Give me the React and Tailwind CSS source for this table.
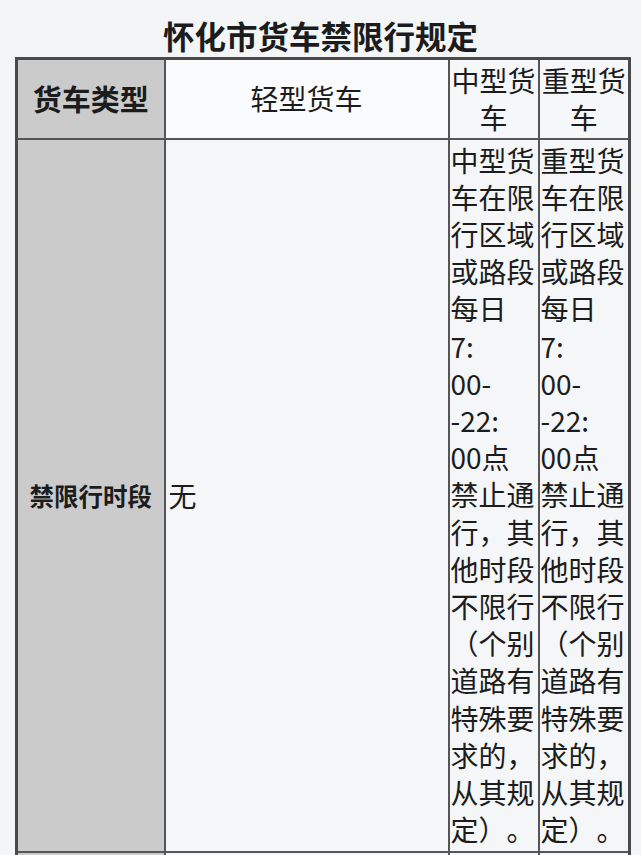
import React from "react";

const midLines = [
  "中型货",
  "车在限",
  "行区域",
  "或路段",
  "每日",
  "7:",
  "00-",
  "-22:",
  "00点",
  "禁止通",
  "行，其",
  "他时段",
  "不限行",
  "（个别",
  "道路有",
  "特殊要",
  "求的，",
  "从其规",
  "定）。",
];

const heavyLines = ["重型货", ...midLines.slice(1)];

function Lines({ lines }) {
  return (
    <div className="flex flex-col">
      {lines.map((l, i) => (
        <div key={i} className="whitespace-nowrap">
          {l}
        </div>
      ))}
    </div>
  );
}

export default function App() {
  return (
    <div
      className="min-h-[855px] bg-[#f3f5f6] text-[#1c1c1c] [text-spacing-trim:space-all]"
      style={{ fontFamily: '"Noto Sans CJK SC", "Noto Sans", sans-serif' }}
    >
      <div className="pt-[18px] h-[57px] text-center text-[31.5px] leading-[34px] font-bold">
        怀化市货车禁限行规定
      </div>
      <div className="pl-[15px]">
        <table className="table-fixed border-collapse border-[3px] border-[#4a4a4a] w-[613px] text-[28px] leading-[37.2px]">
          <colgroup>
            <col className="w-[148px]" />
            <col className="w-[284px]" />
            <col className="w-[90px]" />
            <col className="w-[91px]" />
          </colgroup>
          <tbody>
            <tr className="h-[80px]">
              <td className="border-2 border-[#555] bg-[#cbcbcb] text-center font-bold align-middle text-[29px]">
                货车类型
              </td>
              <td className="border-2 border-[#555] bg-[#fafbfc] text-center align-middle">
                轻型货车
              </td>
              <td className="border-2 border-[#555] bg-[#f5f7f8] text-center align-middle px-0">
                中型货<br />车
              </td>
              <td className="border-2 border-[#555] bg-[#f5f7f8] text-center align-middle px-0">
                重型货<br />车
              </td>
            </tr>
            <tr>
              <td className="border-2 border-[#555] bg-[#cbcbcb] text-center font-bold align-middle text-[24.5px]">
                禁限行时段
              </td>
              <td className="border-2 border-[#555] bg-[#f4f6f7] align-middle pl-[3px]">
                无
              </td>
              <td className="border-2 border-[#555] bg-[#f4f6f7] align-top pt-[2px] pb-[3px] pl-[1px]">
                <Lines lines={midLines} />
              </td>
              <td className="border-2 border-[#555] bg-[#f4f6f7] align-top pt-[2px] pb-[3px] pl-[1px]">
                <Lines lines={heavyLines} />
              </td>
            </tr>
            <tr className="h-[60px]">
              <td className="border-2 border-[#555] bg-[#cbcbcb]"></td>
              <td className="border-2 border-[#555] bg-[#f4f6f7]"></td>
              <td className="border-2 border-[#555] bg-[#f4f6f7]"></td>
              <td className="border-2 border-[#555] bg-[#f4f6f7]"></td>
            </tr>
          </tbody>
        </table>
      </div>
    </div>
  );
}
